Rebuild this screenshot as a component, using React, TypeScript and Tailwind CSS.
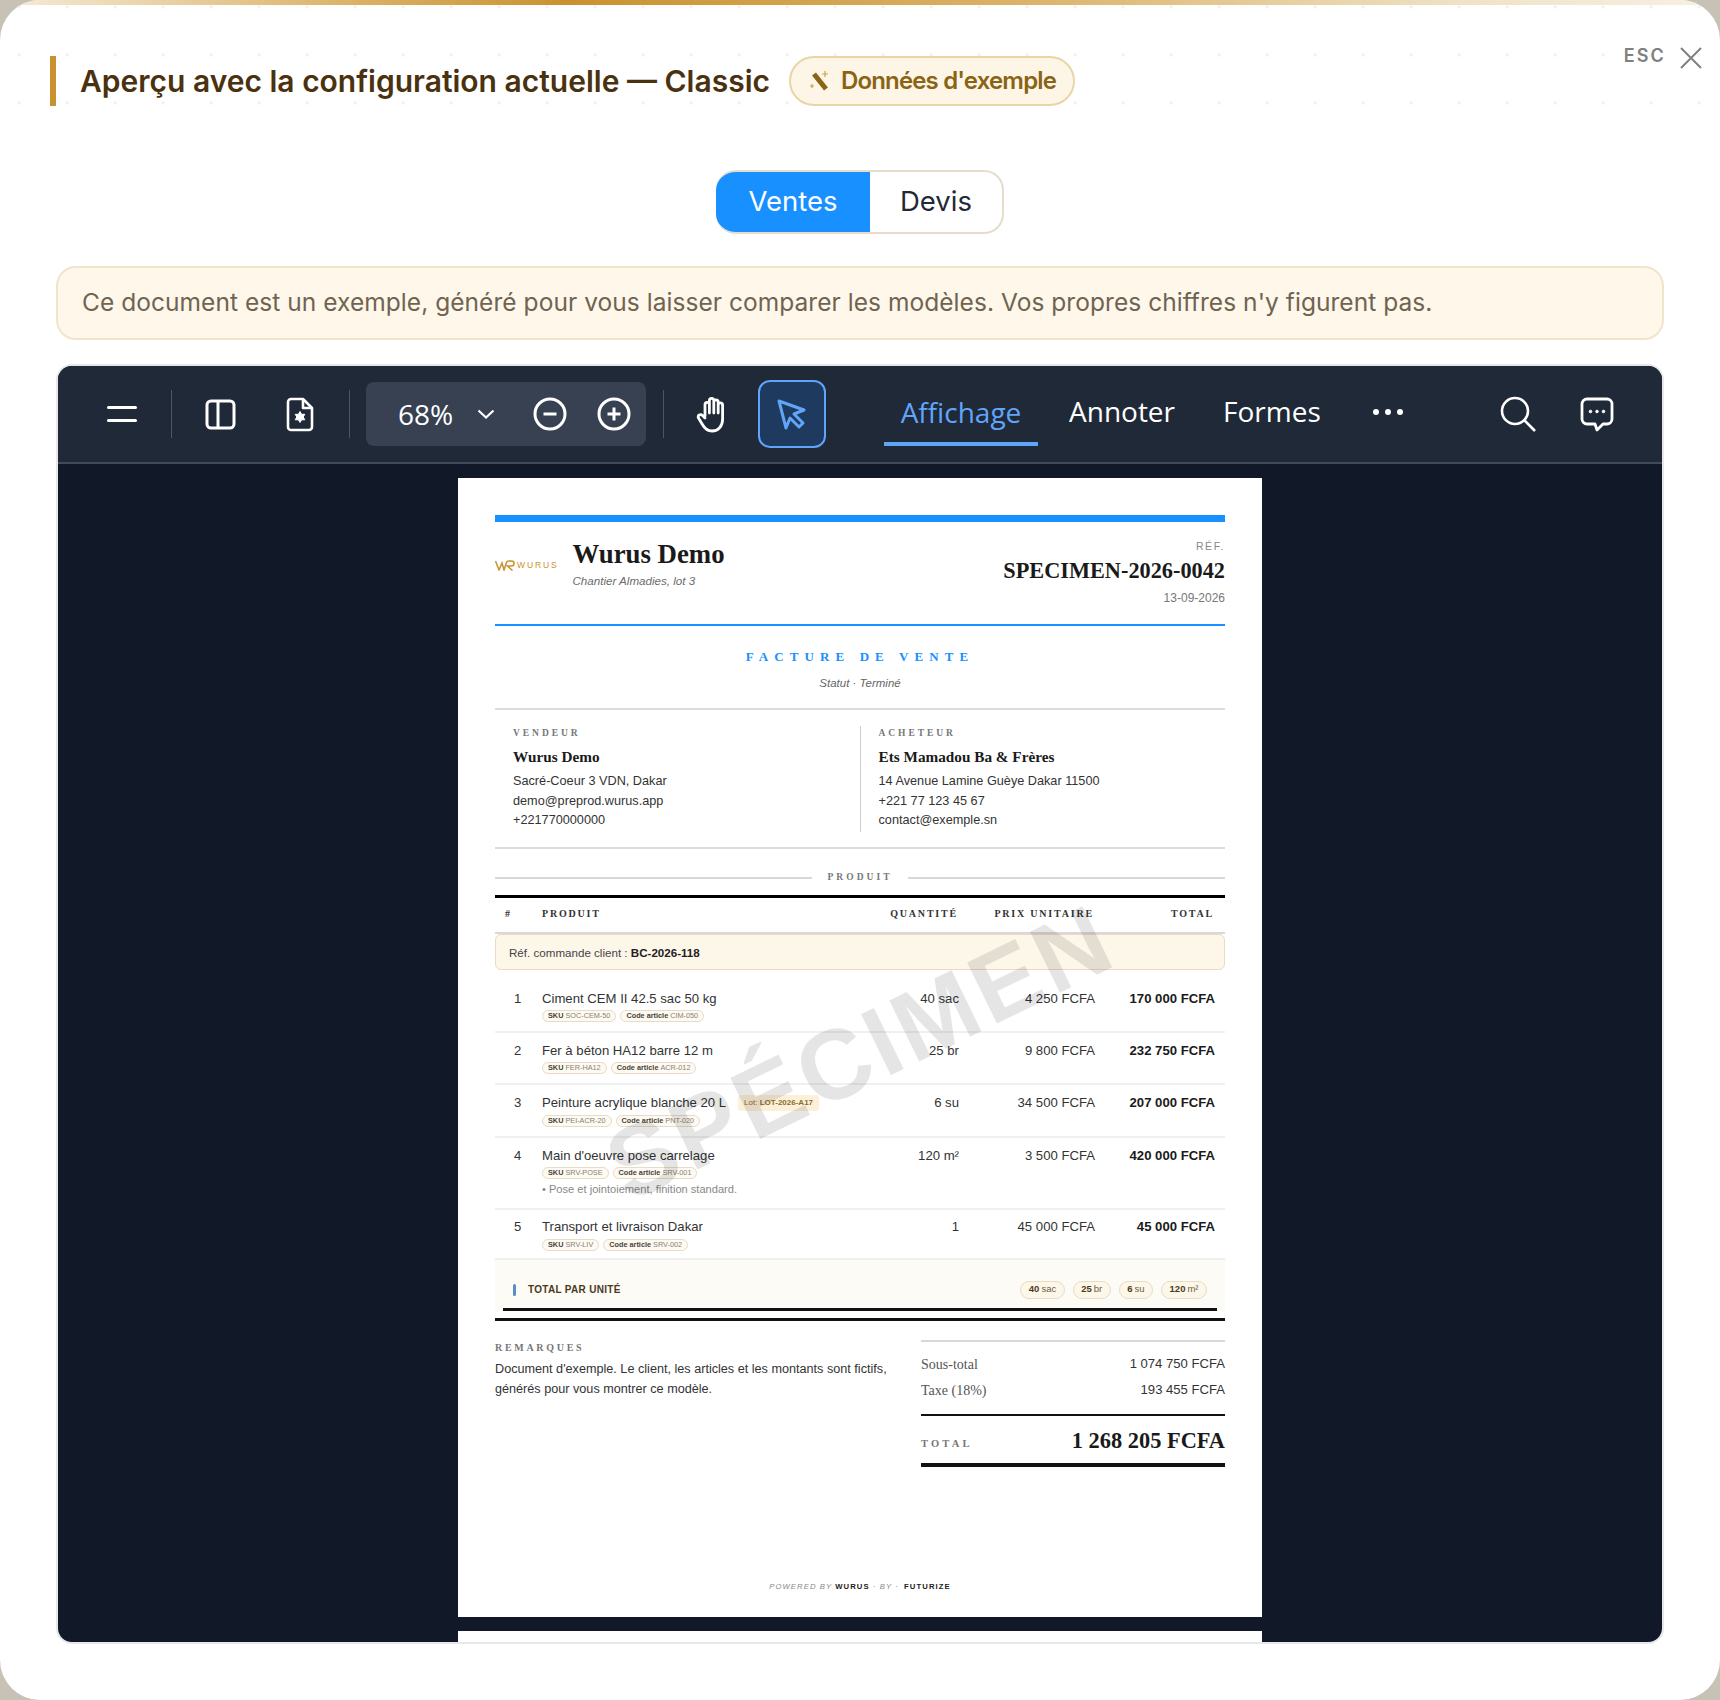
const serif = 'font-["Liberation_Serif",serif]';
const sans = 'font-["Liberation_Sans",sans-serif]';

const rows = [
    { n: 1, name: 'Ciment CEM II 42.5 sac 50 kg', sku: 'SOC-CEM-50', code: 'CIM-050', qty: '40 sac', price: '4 250 FCFA', total: '170 000 FCFA', h: 'h-[63px] pt-[21px]' },
    { n: 2, name: 'Fer à béton HA12 barre 12 m', sku: 'FER-HA12', code: 'ACR-012', qty: '25 br', price: '9 800 FCFA', total: '232 750 FCFA', h: 'h-[52px] pt-[10px]' },
    { n: 3, name: 'Peinture acrylique blanche 20 L', sku: 'PEI-ACR-20', code: 'PNT-020', qty: '6 su', price: '34 500 FCFA', total: '207 000 FCFA', lot: 'LOT-2026-A17', h: 'h-[53px] pt-[10px]' },
    { n: 4, name: "Main d'oeuvre pose carrelage", sku: 'SRV-POSE', code: 'SRV-001', qty: '120 m²', price: '3 500 FCFA', total: '420 000 FCFA', note: '• Pose et jointoiement, finition standard.', h: 'h-[72px] pt-[10px]' },
    { n: 5, name: 'Transport et livraison Dakar', sku: 'SRV-LIV', code: 'SRV-002', qty: '1', price: '45 000 FCFA', total: '45 000 FCFA', h: 'h-[50px] pt-[9px]' },
];

const Tag = ({ label, value }: { label: string; value: string }) => (
    <span className="inline-flex h-[12px] items-center rounded-full border border-[#e8dcc4] bg-[#fdfaf3] px-[5px] text-[7.3px] leading-none whitespace-nowrap text-[#8a8172]">
        <b className="mr-[2px] text-[#4a4335]">{label}</b>
        {value}
    </span>
);

const Party = ({ title, name, lines }: { title: string; name: string; lines: string[] }) => (
    <div className="flex-1 pl-[18px]">
        <div className={`${serif} text-[9.5px] leading-[14px] font-bold tracking-[0.31em] text-[#777]`}>{title}</div>
        <div className={`${serif} mt-[8px] text-[15.25px] leading-[18px] font-bold text-[#1a1a1a]`}>{name}</div>
        <div className="mt-[6px] text-[12.7px] leading-[19.5px] text-[#333]">
            {lines.map((l) => (
                <div key={l}>{l}</div>
            ))}
        </div>
    </div>
);

const Divider = () => <div className="h-[48px] w-px bg-[#4b5563]" />;

const Toolbar = () => (
    <div className='flex h-[98px] shrink-0 items-center border-b-2 border-[#3f4a5a] bg-[#1f2937] font-["Open_Sans",sans-serif] text-white'>
        <div className="ml-[49px] flex w-[30px] flex-col gap-[10px]">
            <div className="h-[3px] rounded-full bg-white" />
            <div className="h-[3px] rounded-full bg-white" />
        </div>
        <div className="ml-[34px]"><Divider /></div>
        <svg className="ml-[33px]" width="31" height="31" viewBox="0 0 31 31" fill="none" stroke="white" strokeWidth="3">
            <rect x="2" y="2" width="27" height="27" rx="4" />
            <path d="M13 2v27" />
        </svg>
        <svg className="ml-[50px]" width="28" height="35" viewBox="0 0 28 35" fill="none" stroke="white" strokeWidth="2.6" strokeLinejoin="round">
            <path d="M5 2h12l9 9v19a3 3 0 0 1-3 3H5a3 3 0 0 1-3-3V5a3 3 0 0 1 3-3z" />
            <path d="M17 2v9h9" />
            <path d="M14 14.5l1.6 2.8h3.2l-1.6 2.7 1.6 2.8h-3.2L14 25.5l-1.6-2.7H9.2l1.6-2.8-1.6-2.7h3.2z" fill="white" strokeWidth="1" />
        </svg>
        <div className="ml-[35px]"><Divider /></div>
        <div className="ml-[16px] flex h-[64px] w-[280px] items-center rounded-lg bg-[#374151]">
            <span className="ml-[32px] text-[28px]">68%</span>
            <svg className="ml-[24px]" width="18" height="10" viewBox="0 0 18 10" fill="none" stroke="white" strokeWidth="2.2"><path d="M1.5 1.5L9 8.5l7.5-7" /></svg>
            <svg className="ml-[38px]" width="34" height="34" viewBox="0 0 34 34" fill="none" stroke="white" strokeWidth="3">
                <circle cx="17" cy="17" r="15" />
                <path d="M10.5 17h13" />
            </svg>
            <svg className="ml-[30px]" width="34" height="34" viewBox="0 0 34 34" fill="none" stroke="white" strokeWidth="3">
                <circle cx="17" cy="17" r="15" />
                <path d="M10.5 17h13M17 10.5v13" />
            </svg>
        </div>
        <div className="ml-[17px]"><Divider /></div>
        <svg className="ml-[32px]" width="33" height="37" viewBox="0 0 33 37" fill="none" stroke="white" strokeWidth="2.8" strokeLinecap="round" strokeLinejoin="round">
            <path d="M9 20V8.5a2.2 2.2 0 0 1 4.4 0V17M13.4 17V4.5a2.2 2.2 0 0 1 4.4 0V17M17.8 17V6a2.2 2.2 0 0 1 4.4 0v11M22.2 17V9a2.2 2.2 0 0 1 4.4 0v14c0 7-4 12-10.5 12-5 0-7.5-2.5-10-7L2.5 22c-1.5-2.5 2-4.5 4-2.5L9 22" />
        </svg>
        <div className="ml-[29px] flex h-[68px] w-[68px] items-center justify-center rounded-xl border-2 border-[#60a5fa] bg-[#1e3a5f]">
            <svg width="32" height="32" viewBox="0 0 32 32" fill="none" stroke="#60a5fa" strokeWidth="3" strokeLinejoin="round">
                <path d="M3 3l25 9-10 4 9 9-4 4-9-9-4 10z" />
            </svg>
        </div>
        <div className="ml-[58px] flex h-[64px] w-[154px] items-center justify-center border-b-4 border-[#60a5fa] text-[28px] text-[#60a5fa]">Affichage</div>
        <span className="mb-[6px] ml-[31px] text-[28px]">Annoter</span>
        <span className="mb-[6px] ml-[48px] text-[28px]">Formes</span>
        <div className="mb-[4px] ml-[52px] flex gap-[6px]">
            <div className="h-[6px] w-[6px] rounded-full bg-white" />
            <div className="h-[6px] w-[6px] rounded-full bg-white" />
            <div className="h-[6px] w-[6px] rounded-full bg-white" />
        </div>
        <svg className="ml-[97px]" width="36" height="36" viewBox="0 0 36 36" fill="none" stroke="white" strokeWidth="2.6">
            <circle cx="15" cy="15" r="13" />
            <path d="M24.5 24.5L35 35" />
        </svg>
        <svg className="ml-[43px]" width="36" height="36" viewBox="0 0 36 36" fill="none" stroke="white" strokeWidth="2.8" strokeLinejoin="round">
            <path d="M8 3h20a5 5 0 0 1 5 5v15a5 5 0 0 1-5 5h-4l-6 6-2-6H8a5 5 0 0 1-5-5V8a5 5 0 0 1 5-5z" />
            <circle cx="11.5" cy="15.5" r="1.3" fill="white" strokeWidth="1" />
            <circle cx="18" cy="15.5" r="1.3" fill="white" strokeWidth="1" />
            <circle cx="24.5" cy="15.5" r="1.3" fill="white" strokeWidth="1" />
        </svg>
    </div>
);

const InvoicePage = () => (
    <div className={`${sans} relative mx-auto h-[1139px] w-[804px] shrink-0 overflow-hidden bg-white px-[37px] pt-[37px] text-[#1a1a1a]`}>
        {/* entête */}
        <div className="h-[7px] bg-[#1890ff]" />
        <div className="flex h-[104px] border-b-2 border-[#1890ff]">
            <div className="flex items-start pt-[38px]">
                <svg width="20" height="11" viewBox="0 0 20 11" fill="none" stroke="#c9922e" strokeWidth="1.5"><path d="M0.5 1l3.5 9 3-7 2 7 3-9M12.5 1h4a2.5 2.5 0 0 1 0 5h-4l5 4.5" /></svg>
                <span className="ml-[2px] text-[8.5px] leading-[11px] tracking-[0.22em] text-[#c9922e]">WURUS</span>
            </div>
            <div className="ml-[14px] pt-[16px]">
                <div className={`${serif} text-[26.8px] leading-[32px] font-bold text-[#1a1a1a]`}>Wurus Demo</div>
                <div className="mt-[3px] text-[11.6px] leading-[16px] text-[#6b6b6b] italic">Chantier Almadies, lot 3</div>
            </div>
            <div className="ml-auto pt-[17px] text-right">
                <div className="text-[10.5px] leading-[14px] tracking-[0.15em] text-[#888]">RÉF.</div>
                <div className={`${serif} mt-[3px] text-[22.3px] leading-[30px] font-bold`}>SPECIMEN-2026-0042</div>
                <div className="mt-[4px] text-[12px] leading-[16px] text-[#777]">13-09-2026</div>
            </div>
        </div>
        {/* titre */}
        <div className="flex h-[84px] flex-col items-center border-b-2 border-[#dcdcdc]">
            <div className={`${serif} mt-[22px] text-[13px] leading-[18px] font-bold tracking-[0.47em] text-[#1890ff]`}>FACTURE DE VENTE</div>
            <div className="mt-[9px] text-[11.5px] leading-[16px] text-[#666] italic">Statut · Terminé</div>
        </div>
        {/* parties */}
        <div className="flex h-[139px] border-b-2 border-[#dcdcdc] pt-[16px]">
            <div className="flex h-[106px] w-full">
                <Party title="VENDEUR" name="Wurus Demo" lines={['Sacré-Coeur 3 VDN, Dakar', 'demo@preprod.wurus.app', '+221770000000']} />
                <div className="w-px bg-[#cfcfcf]" />
                <Party title="ACHETEUR" name="Ets Mamadou Ba & Frères" lines={['14 Avenue Lamine Guèye Dakar 11500', '+221 77 123 45 67', 'contact@exemple.sn']} />
            </div>
        </div>
        {/* produit */}
        <div className="mt-[20px] flex h-[17px] items-center gap-[15px]">
            <div className="h-[2px] flex-1 bg-[#d8d8d8]" />
            <span className={`${serif} text-[9.5px] font-bold tracking-[0.32em] text-[#777]`}>PRODUIT</span>
            <div className="h-[2px] flex-1 bg-[#d8d8d8]" />
        </div>
        <div className={`${serif} mt-[9px] grid h-[39px] grid-cols-[37px_1fr_120px_136px_120px] items-center border-t-[3px] border-b-2 border-t-black border-b-[#d8d8d8] pr-[11px] pb-[3px] pl-[10px] text-[10px] font-bold tracking-[0.18em] text-[#333]`}>
            <span>#</span>
            <span>PRODUIT</span>
            <span className="text-right">QUANTITÉ</span>
            <span className="text-right">PRIX UNITAIRE</span>
            <span className="text-right">TOTAL</span>
        </div>
        <div className="flex h-[36px] items-center rounded-md border border-[#eaddbe] bg-[#fdf7ea] pt-[1px] pl-[13px] text-[11.6px] text-[#444]">
            Réf. commande client :&nbsp;<b className="text-[#222]">BC-2026-118</b>
        </div>
        {rows.map((r) => (
            <div key={r.n} className={`${r.h} grid grid-cols-[37px_1fr_120px_136px_120px] items-start border-b-2 border-[#f0f0f0] pr-[10px] pl-[10px] text-[13.15px] leading-[16px] text-[#333]`}>
                <span className="pl-[9px]">{r.n}</span>
                <div>
                    <div className="flex items-center">
                        {r.name}
                        {r.lot && (
                            <span className="ml-[12px] inline-flex h-[16px] items-center rounded-[3px] bg-[#fdf0d8] px-[6px] text-[8px] font-bold text-[#8a6d2f]">
                                <span className="font-normal">Lot:&nbsp;</span>
                                {r.lot}
                            </span>
                        )}
                    </div>
                    <div className={`flex gap-[4px] ${r.lot || r.n === 5 ? 'mt-[4px]' : 'mt-[3px]'}`}>
                        <Tag label="SKU" value={r.sku} />
                        <Tag label="Code article" value={r.code} />
                    </div>
                    {r.note && <div className="mt-[3px] text-[11.1px] leading-[14px] text-[#888]">{r.note}</div>}
                </div>
                <span className="text-right">{r.qty}</span>
                <span className="text-right">{r.price}</span>
                <span className="text-right font-bold text-[#1a1a1a]">{r.total}</span>
            </div>
        ))}
        {/* totaux par unité */}
        <div className="bg-[#fdfbf6] px-[8px]">
            <div className="flex h-[51px] items-center justify-between border-b-[3px] border-[#111] pt-[11px] pr-[10px] pl-[10px]">
                <div className="flex items-center gap-[12px]">
                    <div className="h-[12px] w-[3px] rounded-full bg-[#5b8fc4]" />
                    <span className="text-[10px] font-bold tracking-[0.03em] text-[#4a3a1c]">TOTAL PAR UNITÉ</span>
                </div>
                <div className="flex gap-[8px]">
                    {[['40', 'sac'], ['25', 'br'], ['6', 'su'], ['120', 'm²']].map(([a, b]) => (
                        <span key={b} className="inline-flex h-[18px] items-center rounded-full border border-[#e8dcc4] bg-[#fdf7ea] px-[7.500px] text-[9.5px] text-[#6b5d42]">
                            <b className="mr-[2px] text-[#4a3a1c]">{a}</b>
                            {b}
                        </span>
                    ))}
                </div>
            </div>
        </div>
        <div className="mt-[7px] h-[3px] bg-[#111]" />
        {/* remarques et totaux */}
        <div className="mt-[19px] flex">
            <div className="w-[426px]">
                <div className={`${serif} mt-[2px] text-[10px] leading-[12px] font-bold tracking-[0.27em] text-[#777]`}>REMARQUES</div>
                <div className="mt-[5px] w-[400px] text-[12.65px] leading-[20px] text-[#333]">
                    Document d'exemple. Le client, les articles et les montants sont fictifs, générés pour vous montrer ce modèle.
                </div>
            </div>
            <div className="w-[304px] border-t-2 border-[#d8d8d8]">
                <div className="mt-[12px] flex h-[20px] items-center justify-between text-[13.1px] text-[#333]">
                    <span className={`${serif} text-[14px] text-[#555]`}>Sous-total</span>
                    <span>1 074 750 FCFA</span>
                </div>
                <div className="mt-[6px] flex h-[20px] items-center justify-between text-[13.1px] text-[#333]">
                    <span className={`${serif} text-[14px] text-[#555]`}>Taxe (18%)</span>
                    <span>193 455 FCFA</span>
                </div>
                <div className="mt-[14px] flex h-[53px] items-center justify-between border-t-2 border-b-4 border-[#111]">
                    <span className={`${serif} mt-[8px] text-[10.5px] font-bold tracking-[0.3em] text-[#777]`}>TOTAL</span>
                    <span className={`${serif} mt-[2px] text-[22.4px] font-bold`}>1 268 205 FCFA</span>
                </div>
            </div>
        </div>
        {/* pied */}
        <div className="absolute inset-x-0 top-[1103px] text-center text-[7.7px] leading-[12px] tracking-[0.14em] text-[#888] italic">
            POWERED BY <b className="text-[#222] not-italic">WURUS</b> · BY · <b className="ml-[2px] text-[#222] not-italic">FUTURIZE</b>
        </div>
        {/* filigrane */}
        <div className="pointer-events-none absolute top-[574px] left-1/2 -translate-x-1/2 -translate-y-1/2 -rotate-[26deg] text-[99px] leading-none font-bold tracking-[0.04em] whitespace-nowrap text-black/[0.1]">
            SPÉCIMEN
        </div>
    </div>
);

export default function App() {
    return (
        <div className="h-[1700px] w-[1720px] overflow-hidden bg-[#c8c2b6]">
            <div className='relative h-full w-full overflow-hidden rounded-[40px] bg-white font-["Inter",sans-serif]'>
                <div className="absolute inset-x-0 top-0 h-[5px] bg-[linear-gradient(90deg,#f5ecd9_0%,#dcb36a_20%,#c9922e_33%,#dcb36a_60%,#efe2c6_85%,#f7f1e4_100%)]" />
                <div className="pointer-events-none absolute inset-x-0 top-0 h-[120px] bg-[radial-gradient(circle,#f6f4ef_1.5px,transparent_2px)] bg-[length:48px_48px] bg-[position:-5px_-17px]" />

                <div className="relative flex h-[126px] items-start pt-[56px] pl-[50px]">
                    <div className="flex h-[50px] items-center border-l-[6px] border-[#c9922e] pl-[24px]">
                        <h1 className="text-[30px] font-semibold tracking-[0em] text-[#4a3210]">Aperçu avec la configuration actuelle — Classic</h1>
                    </div>
                    <div className="ml-[19px] flex h-[50px] items-center rounded-full border-2 border-[#e8d5a8] bg-[#fdf6e7] pr-[17px] pl-[18px] text-[24px] font-semibold tracking-[-0.035em] text-[#8a6414]">
                        <svg className="mr-[10px]" width="22" height="24" viewBox="0 0 22 24" fill="none">
                            <path d="M5 5l12 15" stroke="#8a6414" strokeWidth="5" />
                            <path d="M16 2v6M13 5h6M3 15v4M1 17h4" stroke="#c9a14a" strokeWidth="1.2" />
                        </svg>
                        Données d'exemple
                    </div>
                    <div className="absolute top-[46px] right-[18px] flex items-center gap-[14px] text-[#808080]">
                        <span className="-mt-[4px] text-[18px] font-semibold tracking-[0.12em]">ESC</span>
                        <svg width="22" height="22" viewBox="0 0 22 22" fill="none" stroke="currentColor" strokeWidth="2"><path d="M1 1l20 20M21 1L1 21" /></svg>
                    </div>
                </div>

                <div className="mt-[44px] flex justify-center">
                    <div className="flex h-[64px] overflow-hidden rounded-[20px] border-2 border-l-0 border-[#e5dccb] text-[27.5px]">
                        <div className="-my-[2px] flex w-[154px] items-center justify-center bg-[#1890ff] text-white">Ventes</div>
                        <div className="flex w-[132px] items-center justify-center text-[#1f2937]">Devis</div>
                    </div>
                </div>

                <div className="mx-[56px] mt-[32px] flex h-[74px] items-center rounded-[20px] border-2 border-[#f0e4cc] bg-[#fef7ea] pb-[2px] pl-[24px] text-[24.5px] tracking-[0.002em] text-[#6f6452]">
                    Ce document est un exemple, généré pour vous laisser comparer les modèles. Vos propres chiffres n'y figurent pas.
                </div>

                <div className="mx-[56px] mt-[24px] flex h-[1280px] flex-col overflow-hidden rounded-2xl border-2 border-[#e5e7eb] bg-[#111827]">
                    <Toolbar />
                    <div className="flex flex-col gap-[14px] overflow-hidden pt-[14px]">
                        <InvoicePage />
                        <div className="mx-auto h-[40px] w-[804px] shrink-0 bg-white" />
                    </div>
                </div>
            </div>
        </div>
    );
}
